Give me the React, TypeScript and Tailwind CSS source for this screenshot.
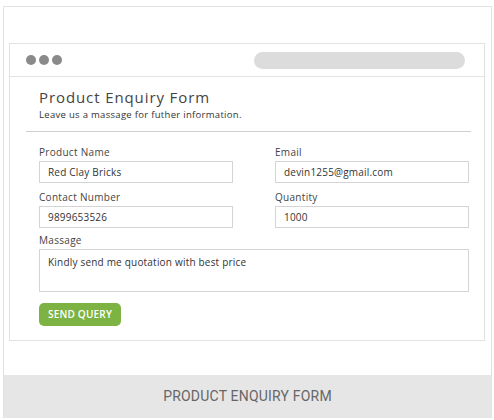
function Field({ label, value }: { label: string; value: string }) {
  return (
    <div className="flex flex-col">
      <label className="text-[10px] leading-[14px] text-[#444] tracking-[0.3px]">{label}</label>
      <div className="mt-[2px] h-[22px] border border-[#d4d4d4] px-[8px] flex items-center text-[10px] text-[#333] tracking-[0.2px]">
        {value}
      </div>
    </div>
  );
}

export default function App() {
  return (
    <div className="w-[494px] h-[420px] bg-white pt-[6px] px-[3px] font-['Open_Sans','Liberation_Sans',sans-serif]">
      <div className="w-[489px] border-x border-t border-[#e2e2e2] flex flex-col">
        {/* browser window */}
        <div className="mt-[36px] ml-[5px] mr-[6px] mb-[34px] border border-[#e2e2e2]">
          <div className="h-[33px] flex items-center justify-between pl-[16px] pr-[19px] border-b border-[#e2e2e2]">
            <div className="flex gap-[3px]">
              <span className="w-[10px] h-[10px] rounded-full bg-[#8a8a8a]" />
              <span className="w-[10px] h-[10px] rounded-full bg-[#8a8a8a]" />
              <span className="w-[10px] h-[10px] rounded-full bg-[#8a8a8a]" />
            </div>
            <div className="w-[211px] h-[17px] rounded-full bg-[#dcdcdc]" />
          </div>

          <div className="pl-[16px] pr-[13px] pt-[11px] pb-[14px]">
            <div className="pl-[13px]">
              <h1 className="text-[15px] leading-[18px] text-[#444] tracking-[0.9px]">Product Enquiry Form</h1>
              <p className="text-[9.5px] leading-[14px] text-[#333] mt-[2px] tracking-[0.3px]">
                Leave us a massage for futher information.
              </p>
            </div>
            <div className="mt-[9px] h-px bg-[#cfcfcf]" />

            <div className="pl-[13px] pr-[2px] mt-[13px]">
              <div className="grid grid-cols-2 gap-x-[42px] gap-y-[7px]">
                <Field label="Product Name" value="Red Clay Bricks" />
                <Field label="Email" value="devin1255@gmail.com" />
                <Field label="Contact Number" value="9899653526" />
                <Field label="Quantity" value="1000" />
              </div>
              <div className="mt-[5px] flex flex-col">
                <label className="text-[10px] leading-[14px] text-[#444] tracking-[0.3px]">Massage</label>
                <div className="mt-[2px] h-[43px] border border-[#d4d4d4] px-[8px] pt-[5px] text-[10px] text-[#333] tracking-[0.2px]">
                  Kindly send me quotation with best price
                </div>
              </div>
              <button className="mt-[11px] w-[82px] h-[23px] rounded-[5px] bg-[#7cb342] text-white text-[10px] font-semibold tracking-[0.2px]">
                SEND QUERY
              </button>
            </div>
          </div>
        </div>

        {/* footer */}
        <div className="h-[43px] bg-[#e6e6e6] flex items-center justify-center text-[14px] text-[#666] font-['Roboto','Liberation_Sans',sans-serif] tracking-[0.2px]">
          PRODUCT ENQUIRY FORM
        </div>
      </div>
    </div>
  );
}
